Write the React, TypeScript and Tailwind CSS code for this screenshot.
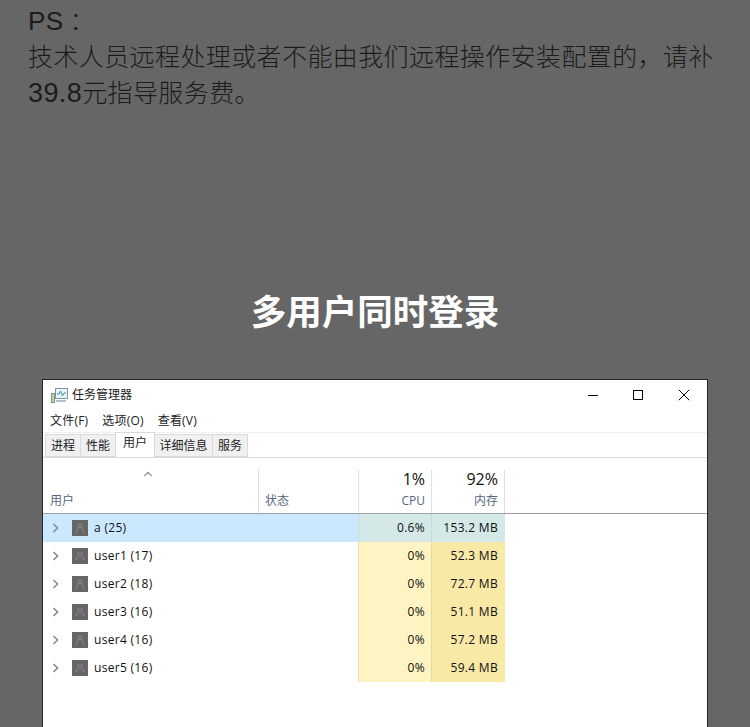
import React from 'react';
import { ChevronUp, X } from 'lucide-react';

const sans = 'font-["Open_Sans","Noto_Sans_CJK_SC",sans-serif]';

const rows = [
  { name: 'a (25)', cpu: '0.6%', mem: '153.2 MB', active: true },
  { name: 'user1 (17)', cpu: '0%', mem: '52.3 MB' },
  { name: 'user2 (18)', cpu: '0%', mem: '72.7 MB' },
  { name: 'user3 (16)', cpu: '0%', mem: '51.1 MB' },
  { name: 'user4 (16)', cpu: '0%', mem: '57.2 MB' },
  { name: 'user5 (16)', cpu: '0%', mem: '59.4 MB' },
];

const AppIcon = () => (
  <svg width="17" height="15" viewBox="0 0 17 15" fill="none">
    <rect x="4.5" y="0.5" width="12" height="10" fill="#e8f4f8" stroke="#7d97a8" />
    <path d="M6 6h2l1.5-3 2 5 1.5-3h2" stroke="#3f8fb5" />
    <rect x="0.5" y="5.5" width="3" height="9" fill="#b9d3a8" stroke="#7f9a78" />
    <rect x="5" y="12" width="10" height="2" fill="#b5c2cb" />
  </svg>
);

const UserIcon = () => (
  <div className="w-4 h-4 bg-[#666666] flex items-center justify-center">
    <svg width="8" height="10" viewBox="0 0 8 10" fill="none" stroke="#8c8c8c">
      <circle cx="4" cy="2.8" r="2.1" />
      <path d="M0.7 9.5V7.2L2.2 5.3M7.3 9.5V7.2L5.8 5.3" />
    </svg>
  </div>
);

const Arrow = () => (
  <svg width="8" height="10" viewBox="0 0 8 10" fill="none" stroke="#8a8a8a" strokeWidth="1.6">
    <path d="M1.5 1l4 4-4 4" />
  </svg>
);

const Tab = ({ label, className, active }: { label: string; className: string; active?: boolean }) =>
  active ? (
    <div className={`${className} relative z-10 h-[25px] bg-white border border-b-0 border-[#d9d9d9] text-[12px] text-[#222] flex items-center justify-center pb-1`}>
      {label}
    </div>
  ) : (
    <div className={`${className} h-[23px] bg-[#f0f0f0] border border-[#d9d9d9] text-[12px] text-[#222] flex items-center justify-center`}>
      {label}
    </div>
  );

const App: React.FC = () => {
  return (
    <div className="w-[750px] h-[727px] overflow-hidden bg-[#666666] font-['Noto_Sans_CJK_SC',sans-serif]">
      <div className="pl-7 pt-px text-[25px] leading-9 tracking-[0.4px] font-light text-[#1c1c1c]">
        <div><span className="font-['Liberation_Sans',sans-serif] font-normal text-[26px] leading-none">PS</span><span className="ml-[6px]">：</span></div>
        <div className="whitespace-nowrap">技术人员远程处理或者不能由我们远程操作安装配置的，请补</div>
        <div><span className="font-['Liberation_Sans',sans-serif] font-normal text-[27px] leading-none">39.8</span>元指导服务费。</div>
      </div>

      <h1 className="mt-[176px] text-center text-[35.5px] leading-[50px] font-bold text-white">多用户同时登录</h1>

      <div className={`mt-[44px] ml-[42px] w-[666px] h-[400px] bg-white border border-[#1c2733] ${sans}`}>
        <div className="h-[30px] pl-2 pr-[13px] flex items-center text-[12px] text-[#222]">
          <AppIcon />
          <span className="ml-1 flex-1">任务管理器</span>
          <div className="w-[10px] h-px bg-black mr-[35px]" />
          <div className="w-[10px] h-[10px] border border-black mr-[31px]" />
          <X size={20} strokeWidth={1.2} className="text-black" />
        </div>
        <div className="h-[22px] pl-[7px] flex items-center gap-[14px] text-[12px] tracking-[0.2px] text-[#222]">
          <span>文件(F)</span>
          <span>选项(O)</span>
          <span>查看(V)</span>
        </div>
        <div className="h-[25px] pl-[2px] border-t border-[#f0f0f0] flex items-end">
          <Tab label="进程" className="w-[36px]" />
          <Tab label="性能" className="w-[36px] -ml-px" />
          <Tab label="用户" active className="w-[40px] -ml-px" />
          <Tab label="详细信息" className="w-[59px] -ml-px" />
          <Tab label="服务" className="w-[36px] -ml-px" />
        </div>
        <div className="h-[57px] border-y border-t-[#d9d9d9] border-b-[#a0a0a0] flex">
          <div className="w-[216px] border-r border-[#e0e0e0] mt-[12px] pl-[7px] flex flex-col justify-between pb-[3px]">
            <ChevronUp size={14} className="ml-[91px] -mt-[3px] text-[#999]" />
            <span className="text-[12px] text-[#56677f]">用户</span>
          </div>
          <div className="w-[100px] border-r border-[#e0e0e0] mt-[12px] pl-[6px] flex items-end pb-[3px]">
            <span className="text-[12px] text-[#56677f]">状态</span>
          </div>
          <div className="w-[73px] border-r border-[#e0e0e0] mt-[12px] pr-[6px] text-right">
            <div className="text-[16px] leading-[18px] text-[#111]">1%</div>
            <div className="text-[12px] leading-[18px] mt-[4px] text-[#56677f]">CPU</div>
          </div>
          <div className="w-[73px] border-r border-[#e0e0e0] mt-[12px] pr-[6px] text-right">
            <div className="text-[16px] leading-[18px] text-[#111]">92%</div>
            <div className="text-[12px] leading-[18px] mt-[4px] text-[#56677f]">内存</div>
          </div>
        </div>
        {rows.map((r) => (
          <div key={r.name} className="h-[28px] flex text-[12px] tracking-[0.3px] text-[#111]">
            <div className={`w-[315px] flex items-center pl-[9px] ${r.active ? 'bg-[#cce8ff]' : ''}`}>
              <Arrow />
              <div className="ml-3"><UserIcon /></div>
              <span className="ml-[6px]">{r.name}</span>
            </div>
            <div className={`w-[73px] flex items-center justify-end pr-[6px] border-l ${r.active ? 'bg-[#d5e8e8] border-[#c8dcdc]' : 'bg-[#fdf3c3] border-[#f2e2a8]'}`}>
              {r.cpu}
            </div>
            <div className={`w-[74px] flex items-center justify-end pr-[7px] border-l ${r.active ? 'bg-[#d5e8e8] border-[#c8dcdc]' : 'bg-[#f9e9a7] border-[#ecd88e]'}`}>
              {r.mem}
            </div>
          </div>
        ))}
      </div>
    </div>
  );
};

export default App;
